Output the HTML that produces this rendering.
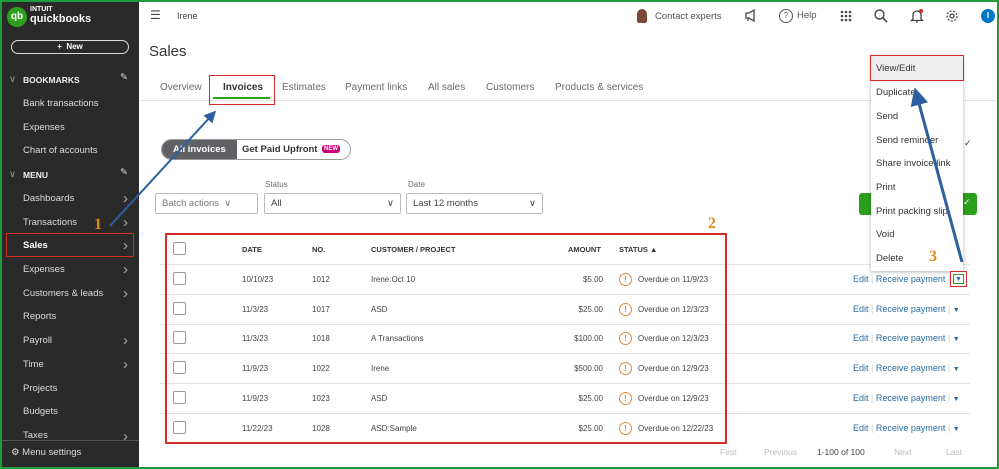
<!DOCTYPE html><html><head><style>
*{box-sizing:border-box;margin:0;padding:0}
body{width:999px;height:469px;overflow:hidden;font-family:"Liberation Sans",sans-serif;background:#fff;position:relative}
.a{position:absolute;white-space:nowrap}
#frame{position:absolute;left:0;top:0;width:999px;height:469px;border:2px solid #1e9e3a;z-index:50;pointer-events:none}
#side{position:absolute;left:0;top:0;width:139px;height:469px;background:#2a2a2a;color:#ddd;font-size:9.5px}
#side .i{position:absolute;left:23px}
#side .c{position:absolute;left:123px;color:#aaa;font-size:15px;line-height:15px}
.hd{font-weight:bold;font-size:8.5px;color:#eee}
.gray{color:#6b6c72}
.row{position:absolute;left:160px;width:810px;height:1px;background:#e3e3e3}
.cb{position:absolute;left:173px;width:13px;height:13px;border:1px solid #999;border-radius:2px}
.t{font-size:8px;color:#444}
.th{font-size:7.5px;font-weight:bold;color:#333}
.ex{position:absolute;left:619px;width:13px;height:13px;border:1.3px solid #e08a3c;border-radius:50%;color:#e08a3c;font-size:8px;text-align:center;line-height:11px;font-weight:bold}
.lnk{font-size:9px;color:#2b6ca3}
.sel{position:absolute;height:21px;border:1px solid #bbb;border-radius:2px;font-size:9.5px;color:#444;padding:4px 6px}
.mi{position:absolute;left:876px;font-size:9.5px;color:#333}
</style></head><body>
<div id="side">
<div class="a" style="left:7px;top:7px;width:20px;height:20px;border-radius:50%;background:#2ca01c;color:#fff;font-size:10px;font-weight:bold;text-align:center;line-height:20px">qb</div>
<div class="a" style="left:30px;top:6px;font-size:7px;font-weight:bold;color:#fff">INTUIT</div>
<div class="a" style="left:30px;top:13px;font-size:11px;font-weight:bold;color:#fff">quickbooks</div>
<div class="a" style="left:11px;top:40px;width:118px;height:14px;border:1.5px solid #ddd;border-radius:8px;color:#fff;font-size:8px;font-weight:bold;text-align:center;line-height:11px">+ &nbsp;New</div>
<div class="a" style="left:9px;top:74px;color:#999">∨</div>
<div class="i hd" style="top:75px">BOOKMARKS</div><div class="a" style="left:120px;top:72px;color:#ddd">✎</div>
<div class="i" style="top:98px">Bank transactions</div>
<div class="i" style="top:122px">Expenses</div>
<div class="i" style="top:145px">Chart of accounts</div>
<div class="a" style="left:9px;top:169px;color:#999">∨</div>
<div class="i hd" style="top:170px">MENU</div><div class="a" style="left:120px;top:167px;color:#ddd">✎</div>
<div class="i" style="top:193px">Dashboards</div><div class="c" style="top:191px">›</div>
<div class="i" style="top:217px">Transactions</div><div class="c" style="top:215px">›</div>
<div class="a" style="left:6px;top:233px;width:128px;height:24px;border:1.5px solid #d42b2b"></div>
<div class="i" style="top:240px;font-weight:bold;color:#fff">Sales</div><div class="c" style="top:238px">›</div>
<div class="i" style="top:264px">Expenses</div><div class="c" style="top:262px">›</div>
<div class="i" style="top:288px">Customers &amp; leads</div><div class="c" style="top:286px">›</div>
<div class="i" style="top:311px">Reports</div>
<div class="i" style="top:335px">Payroll</div><div class="c" style="top:333px">›</div>
<div class="i" style="top:359px">Time</div><div class="c" style="top:357px">›</div>
<div class="i" style="top:383px">Projects</div>
<div class="i" style="top:406px">Budgets</div>
<div class="i" style="top:430px">Taxes</div><div class="c" style="top:429px">›</div>
<div class="a" style="left:0;top:440px;width:139px;height:29px;background:#2a2a2a;border-top:1px solid #555"></div>
<div class="a" style="left:11px;top:447px;font-size:9.5px">⚙ Menu settings</div>
</div>
<!-- top bar -->
<div class="a" style="left:150px;top:8px;font-size:12px;color:#444">☰</div>
<div class="a" style="left:177px;top:11px;font-size:9px;color:#444">Irene</div>
<div class="a" style="left:637px;top:9px;width:10px;height:14px;border-radius:5px 5px 2px 2px;background:#7a4a35"></div>
<div class="a" style="left:655px;top:11px;font-size:9.5px;color:#555">Contact experts</div>
<svg class="a" style="left:744px;top:9px" width="14" height="13" viewBox="0 0 14 13"><path d="M2 4h3l5-3v11l-5-3H2z M4 9v3" fill="none" stroke="#444" stroke-width="1.3"/></svg>
<div class="a" style="left:779px;top:9px;width:14px;height:14px;border:1.3px solid #555;border-radius:50%;font-size:8px;text-align:center;line-height:12px;color:#555">?</div>
<div class="a" style="left:797px;top:10px;font-size:9.5px;color:#555">Help</div>
<svg class="a" style="left:840px;top:10px" width="12" height="12"><g fill="#444"><circle cx="2" cy="2" r="1.3"/><circle cx="6" cy="2" r="1.3"/><circle cx="10" cy="2" r="1.3"/><circle cx="2" cy="6" r="1.3"/><circle cx="6" cy="6" r="1.3"/><circle cx="10" cy="6" r="1.3"/><circle cx="2" cy="10" r="1.3"/><circle cx="6" cy="10" r="1.3"/><circle cx="10" cy="10" r="1.3"/></g></svg>
<svg class="a" style="left:874px;top:9px" width="14" height="14"><circle cx="5.5" cy="5.5" r="4.5" fill="none" stroke="#444" stroke-width="1.4"/><path d="M9 9l4 4" stroke="#444" stroke-width="1.6"/></svg>
<svg class="a" style="left:910px;top:8px" width="14" height="15"><path d="M3 11V7a4 4 0 0 1 8 0v4l1.5 1.5h-11z M6 14h2" fill="none" stroke="#444" stroke-width="1.3"/><circle cx="11" cy="3" r="2" fill="#d52b1e"/></svg>
<svg class="a" style="left:945px;top:9px" width="14" height="14" viewBox="0 0 14 14"><circle cx="7" cy="7" r="2" fill="none" stroke="#444" stroke-width="1.3"/><circle cx="7" cy="7" r="5" fill="none" stroke="#444" stroke-width="1.3" stroke-dasharray="2 1.5"/></svg>
<div class="a" style="left:981px;top:9px;width:14px;height:14px;border-radius:50%;background:#0077c5;color:#fff;font-size:8px;text-align:center;line-height:14px;font-weight:bold">I</div>
<div class="a" style="left:149px;top:43px;font-size:15px;color:#333">Sales</div>
<!-- tabs -->
<div class="a" style="left:140px;top:100px;width:857px;height:1px;background:#e3e3e3"></div>
<div class="a gray" style="left:160px;top:82px;font-size:10px">Overview</div>
<div class="a" style="left:209px;top:75px;width:66px;height:30px;border:1.5px solid #d42b2b"></div>
<div class="a" style="left:223px;top:82px;font-size:10px;color:#333;font-weight:bold">Invoices</div>
<div class="a" style="left:213px;top:97px;width:57px;height:2px;background:#2ca01c"></div>
<div class="a gray" style="left:282px;top:82px;font-size:10px">Estimates</div>
<div class="a gray" style="left:345px;top:82px;font-size:10px">Payment links</div>
<div class="a gray" style="left:428px;top:82px;font-size:10px">All sales</div>
<div class="a gray" style="left:486px;top:82px;font-size:10px">Customers</div>
<div class="a gray" style="left:555px;top:82px;font-size:10px">Products &amp; services</div>
<!-- toggle -->
<div class="a" style="left:161px;top:139px;width:190px;height:21px;border:1.5px solid #999;border-radius:11px;overflow:hidden">
<div class="a" style="left:0;top:0;width:75px;height:19px;background:#5f6165"></div></div>
<div class="a" style="left:173px;top:144px;font-size:9.5px;color:#fff;font-weight:bold">All invoices</div>
<div class="a" style="left:242px;top:144px;font-size:9.5px;color:#333;font-weight:bold">Get Paid Upfront</div>
<div class="a" style="left:322px;top:145px;background:#c9007a;color:#fff;font-size:6px;font-weight:bold;padding:1px 2px;border-radius:3px">NEW</div>
<!-- filters -->
<div class="a gray" style="left:265px;top:180px;font-size:8px">Status</div>
<div class="a gray" style="left:408px;top:180px;font-size:8px">Date</div>
<div class="sel" style="left:155px;top:193px;width:103px;color:#777">Batch actions &nbsp;∨</div>
<div class="sel" style="left:264px;top:193px;width:137px">All<span style="position:absolute;right:6px">∨</span></div>
<div class="sel" style="left:406px;top:193px;width:137px">Last 12 months<span style="position:absolute;right:6px">∨</span></div>
<div class="a" style="left:859px;top:193px;width:118px;height:22px;background:#2ca01c;border-radius:3px"></div>
<div class="a" style="left:963px;top:197px;color:#fff;font-size:9px">✓</div>
<div class="a" style="left:964px;top:138px;font-size:9px;color:#333">✓</div>
<!-- table -->
<div class="cb" style="top:242px"></div>
<div class="a th" style="left:242px;top:245px">DATE</div>
<div class="a th" style="left:312px;top:245px">NO.</div>
<div class="a th" style="left:371px;top:245px">CUSTOMER / PROJECT</div>
<div class="a th" style="left:568px;top:245px">AMOUNT</div>
<div class="a th" style="left:619px;top:245px">STATUS ▲</div>
<div class="row" style="top:264px"></div><div class="row" style="top:294px"></div><div class="row" style="top:324px"></div><div class="row" style="top:353px"></div><div class="row" style="top:383px"></div><div class="row" style="top:413px"></div>
<div id="rows"></div>
<script>
var d=[["10/10/23","1012","Irene:Oct 10","$5.00","11/9/23"],["11/3/23","1017","ASD","$25.00","12/3/23"],["11/3/23","1018","A Transactions","$100.00","12/3/23"],["11/9/23","1022","Irene","$500.00","12/9/23"],["11/9/23","1023","ASD","$25.00","12/9/23"],["11/22/23","1028","ASD:Sample","$25.00","12/22/23"]];
var h="";d.forEach(function(r,i){var y=279+i*29.7;
h+='<div class="cb" style="top:'+(y-7)+'px"></div><div class="a t" style="left:242px;top:'+(y-4)+'px">'+r[0]+'</div><div class="a t" style="left:312px;top:'+(y-4)+'px">'+r[1]+'</div><div class="a t" style="left:371px;top:'+(y-4)+'px">'+r[2]+'</div><div class="a t" style="right:396px;top:'+(y-4)+'px">'+r[3]+'</div><div class="ex" style="top:'+(y-6)+'px">!</div><div class="a t" style="left:638px;top:'+(y-4)+'px">Overdue on '+r[4]+'</div><div class="a lnk" style="left:853px;top:'+(y-5)+'px">Edit <span style="color:#ccc">|</span> Receive payment <span style="color:#ccc">|</span> <span style="font-size:7px">▼</span></div>';});
document.getElementById("rows").innerHTML=h;
</script>
<div class="a" style="left:165px;top:233px;width:562px;height:211px;border:2px solid #d42b2b"></div>
<!-- pagination -->
<div class="a" style="left:720px;top:447px;font-size:8.5px;color:#bbb">First</div>
<div class="a" style="left:764px;top:447px;font-size:8.5px;color:#bbb">Previous</div>
<div class="a" style="left:817px;top:447px;font-size:8.5px;color:#444">1-100 of 100</div>
<div class="a" style="left:894px;top:447px;font-size:8.5px;color:#bbb">Next</div>
<div class="a" style="left:946px;top:447px;font-size:8.5px;color:#bbb">Last</div>
<!-- menu -->
<div class="a" style="left:871px;top:56px;width:92px;height:215px;background:#fff;box-shadow:0 1px 4px rgba(0,0,0,.3)"></div>
<div class="a" style="left:870px;top:55px;width:94px;height:26px;background:#eee;border:1.5px solid #d42b2b"></div>
<div class="mi" style="top:63px">View/Edit</div>
<div class="mi" style="top:87px">Duplicate</div>
<div class="mi" style="top:111px">Send</div>
<div class="mi" style="top:135px">Send reminder</div>
<div class="mi" style="top:158px">Share invoice link</div>
<div class="mi" style="top:182px">Print</div>
<div class="mi" style="top:206px">Print packing slip</div>
<div class="mi" style="top:229px">Void</div>
<div class="mi" style="top:253px">Delete</div>
<div class="a" style="left:950px;top:271px;width:17px;height:16px;border:1.5px solid #d42b2b;background:#fff"></div>
<div class="a" style="left:953px;top:274px;width:11px;height:10px;border:1px solid #2ca01c;color:#2b6ca3;font-size:7px;text-align:center;line-height:9px">▼</div>
<!-- annotations -->
<svg class="a" style="left:0;top:0;z-index:40" width="999" height="469">
<defs><marker id="m" markerWidth="6" markerHeight="6" refX="3" refY="3" orient="auto"><path d="M0,0L6,3L0,6z" fill="#2e5f9e"/></marker></defs>
<line x1="110" y1="226" x2="212" y2="115" stroke="#2e5f9e" stroke-width="2" marker-end="url(#m)"/>
<line x1="962" y1="262" x2="917" y2="96" stroke="#2e5f9e" stroke-width="3" marker-end="url(#m)"/>
</svg>
<div class="a" style="left:94px;top:216px;font-family:'Liberation Serif',serif;font-weight:bold;font-size:16px;color:#e08a1e;z-index:41">1</div>
<div class="a" style="left:708px;top:215px;font-family:'Liberation Serif',serif;font-weight:bold;font-size:16px;color:#e08a1e">2</div>
<div class="a" style="left:929px;top:248px;font-family:'Liberation Serif',serif;font-weight:bold;font-size:16px;color:#e08a1e">3</div>
<div id="frame"></div>
</body></html>
